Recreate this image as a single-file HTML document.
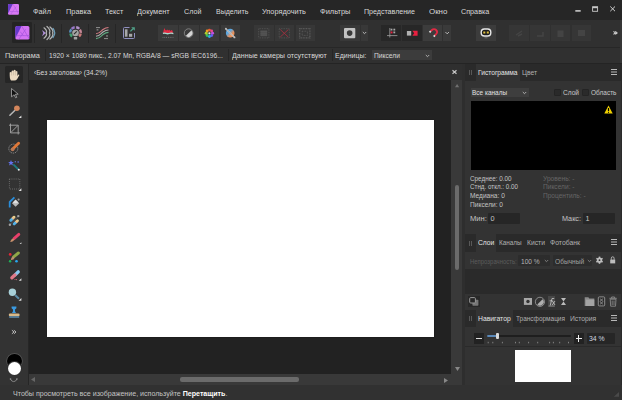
<!DOCTYPE html>
<html><head><meta charset="utf-8">
<style>
*{margin:0;padding:0;box-sizing:border-box}
html,body{width:622px;height:400px;overflow:hidden;background:#262626;font-family:"Liberation Sans",sans-serif;}
.a{position:absolute}
.t{position:absolute;white-space:nowrap;font-size:8px;letter-spacing:-0.5px;color:#d8d8d8;line-height:10px}
svg{position:absolute;overflow:visible}
.p{font-size:7.3px;color:#c4c4c4}
.ham{width:6.3px;height:1.2px;background:#b8b8b8;box-shadow:0 2.5px 0 #b8b8b8,0 5px 0 #b8b8b8}
</style></head><body>
<!-- menu bar -->
<div class="a" style="left:0;top:0;width:622px;height:20px;background:#262626"></div>
<div class="t" style="left:33.3px;top:6.6px;letter-spacing:0;transform:scaleX(0.9099);transform-origin:0 0">Файл</div>
<div class="t" style="left:65.5px;top:6.6px;letter-spacing:0;transform:scaleX(0.9249);transform-origin:0 0">Правка</div>
<div class="t" style="left:104.5px;top:6.6px;letter-spacing:0;transform:scaleX(0.9086);transform-origin:0 0">Текст</div>
<div class="t" style="left:137.0px;top:6.6px;letter-spacing:0;transform:scaleX(0.9211);transform-origin:0 0">Документ</div>
<div class="t" style="left:184.0px;top:6.6px;letter-spacing:0;transform:scaleX(0.8945);transform-origin:0 0">Слой</div>
<div class="t" style="left:215.9px;top:6.6px;letter-spacing:0;transform:scaleX(0.8779);transform-origin:0 0">Выделить</div>
<div class="t" style="left:261.8px;top:6.6px;letter-spacing:0;transform:scaleX(0.9221);transform-origin:0 0">Упорядочить</div>
<div class="t" style="left:319.5px;top:6.6px;letter-spacing:0;transform:scaleX(0.9318);transform-origin:0 0">Фильтры</div>
<div class="t" style="left:364.0px;top:6.6px;letter-spacing:0;transform:scaleX(0.8841);transform-origin:0 0">Представление</div>
<div class="t" style="left:428.8px;top:6.6px;letter-spacing:0;transform:scaleX(0.9896);transform-origin:0 0">Окно</div>
<div class="t" style="left:461.4px;top:6.6px;letter-spacing:0;transform:scaleX(0.9015);transform-origin:0 0">Справка</div>
<!-- window controls -->
<svg style="left:0;top:0" width="622" height="20" viewBox="0 0 622 20">
 <path d="M575.3 10.9 H580.7" stroke="#d4d4d4" stroke-width="1.5"/>
 <rect x="592.6" y="6.7" width="5" height="4.6" fill="none" stroke="#c8c8c8" stroke-width="0.9"/>
 <path d="M592.6 7.5 H597.6" stroke="#c8c8c8" stroke-width="1.4"/>
 <path d="M610.3 6.5 L615 11.2 M615 6.5 L610.3 11.2" stroke="#d0d0d0" stroke-width="1"/>
</svg>
<!-- toolbar -->
<div class="a" style="left:0;top:20px;width:622px;height:27px;background:#303030"></div>
<div class="a" style="left:12px;top:22px;width:20px;height:21px;background:#242424;border-radius:1px"></div>
<svg style="left:0;top:0" width="622" height="48" viewBox="0 0 622 48">
 <defs>
  <linearGradient id="lg2" x1="0" y1="0" x2="1" y2="1"><stop offset="0" stop-color="#6236c8"/><stop offset="0.45" stop-color="#b45ce8"/><stop offset="1" stop-color="#e47af6"/></linearGradient>
 </defs>
 <!-- menu logo -->
 <rect x="8" y="4" width="11" height="10.8" rx="1.2" fill="#d878f4"/>
 <path d="M9.2 4 H12.9 L8 13.6 V5.2 Q8 4 9.2 4Z" fill="#6a3cc8"/>
 <path d="M12.9 4 L18.8 14 M10.5 14.6 L16.2 6.5 M9.5 11.5 H19" stroke="#b05ae0" stroke-width="0.6" fill="none"/>
 <!-- persona logo -->
 <rect x="15.4" y="25.9" width="14" height="13.7" rx="1.6" fill="#d474f4"/>
 <path d="M17 25.9 H21.6 L15.4 38.2 V27.5 Q15.4 25.9 17 25.9Z" fill="#6638cc"/>
 <path d="M21.6 25.9 L29.2 38.8 M18.6 39.6 L25.8 29.2 M16.2 35.6 H29.4 M20 31.5 L23.5 35.6" stroke="#a454dc" stroke-width="0.7" fill="none"/>
 <!-- separators -->
 <path d="M34.5 24 V43 M61.5 24 V43 M88.5 24 V43 M115.5 24 V43" stroke="#262626" stroke-width="1"/>
 <!-- liquify -->
 <path d="M42 30 L46 33 L42 36.2 L43.3 33Z" fill="#b090d8"/>
 <path d="M44 27.8 Q47.5 30.5 46.2 33 Q47.5 35.5 44 38.2 M47 26.5 Q51 30 49.5 33 Q51 36 47 39.5 M50 27 Q54 30.5 52.6 33 Q54 35.5 50 39" stroke="#b4b4b4" stroke-width="1.25" fill="none" stroke-linecap="round"/>
 <path d="M53 28.5 Q56.5 33 53 37.6" stroke="#6a9cb8" stroke-width="1.25" fill="none" stroke-linecap="round"/>
 <!-- develop -->
 <g fill="none" stroke-width="2.4">
  <path d="M70.20 32.56 A5.3 5.3 0 0 1 71.29 29.28" stroke="#5a90c0"/>
  <path d="M71.64 28.87 A5.3 5.3 0 0 1 74.69 27.26" stroke="#9878c8"/>
  <path d="M76.17 27.24 A5.3 5.3 0 0 1 79.27 28.77" stroke="#b090c8"/>
  <path d="M79.95 29.62 A5.3 5.3 0 0 1 80.78 32.97" stroke="#c88898"/>
  <path d="M80.72 33.42 A5.3 5.3 0 0 1 79.05 36.44" stroke="#c87878"/>
  <path d="M72.06 36.53 A5.3 5.3 0 0 1 70.31 33.56" stroke="#40a070"/>
 </g>
 <circle cx="75.5" cy="33" r="3.3" fill="#a4a4a4"/>
 <path d="M74 34.2 L76.8 31.4" stroke="#2a2a2a" stroke-width="1.1"/>
 <rect x="73.8" y="36.9" width="3.4" height="2.6" rx="0.4" fill="#a4a4a4"/>
 <!-- tone map -->
 <path d="M96 27.6 H100" stroke="#9a9a9a" stroke-width="0.9"/>
 <rect x="96.6" y="29.2" width="1.8" height="1.3" fill="#8a8a8a"/>
 <path d="M104 38.6 H108" stroke="#9a9a9a" stroke-width="0.9"/>
 <rect x="106.1" y="35.3" width="1.8" height="1.3" fill="#8a8a8a"/>
 <path d="M96 33.8 C100 33.8 101 31 103 29.5 S106.5 27.5 108.5 27.5" stroke="#d07a80" stroke-width="1.1" fill="none"/>
 <path d="M96 36.2 C100 36.2 101 33.5 103 32 S106.5 30 108.5 30" stroke="#b0b0b0" stroke-width="1.1" fill="none"/>
 <path d="M96 38.6 C100 38.6 101 36 103 34.5 S106.5 32.4 108.5 32.4" stroke="#60a880" stroke-width="1.1" fill="none"/>
 <!-- export -->
 <path d="M129.5 27.5 H124.5 Q123.5 27.5 123.5 28.5 V37.5 Q123.5 38.5 124.5 38.5 H133.5 Q134.5 38.5 134.5 37.5 V33" stroke="#9090c0" stroke-width="1" fill="none"/>
 <rect x="124.9" y="29.3" width="2.6" height="7.4" fill="#a8a8a8"/>
 <rect x="129" y="33.8" width="3.2" height="3" fill="#a8a8a8"/>
 <path d="M130.4 31.4 L133 28.8" stroke="#50a088" stroke-width="1.3"/>
 <path d="M131.2 27.2 H134.8 V30.8Z" fill="#50a088"/>
</svg>
<!-- adjustment group -->
<div class="a" style="left:158px;top:25px;width:20px;height:16px;background:#3a3a3a"></div>
<div class="a" style="left:179px;top:25px;width:20px;height:16px;background:#3a3a3a"></div>
<div class="a" style="left:200px;top:25px;width:19px;height:16px;background:#3a3a3a"></div>
<div class="a" style="left:220.5px;top:25px;width:19.5px;height:16px;background:#3a3a3a"></div>
<div class="a" style="left:254px;top:25px;width:20px;height:16px;background:#373737"></div>
<div class="a" style="left:275px;top:25px;width:19px;height:16px;background:#373737"></div>
<div class="a" style="left:295.5px;top:25px;width:19.5px;height:16px;background:#373737"></div>
<div class="a" style="left:340px;top:25px;width:20px;height:15.5px;background:#383838"></div>
<div class="a" style="left:361px;top:25px;width:7px;height:15.5px;background:#383838"></div>
<div class="a" style="left:381.4px;top:25px;width:19.5px;height:15.5px;background:#272727"></div>
<div class="a" style="left:402px;top:25px;width:19.6px;height:15.5px;background:#272727"></div>
<div class="a" style="left:422.6px;top:25px;width:19.5px;height:15.5px;background:#3c3c3c"></div>
<div class="a" style="left:443.2px;top:25px;width:7.7px;height:15.5px;background:#3a3a3a"></div>
<div class="a" style="left:476px;top:25px;width:20px;height:15.5px;background:#3c3c3c"></div>
<div class="a" style="left:509.4px;top:25px;width:19.6px;height:15.5px;background:#363636"></div>
<div class="a" style="left:530px;top:25px;width:20px;height:15.5px;background:#363636"></div>
<div class="a" style="left:551px;top:25px;width:19.3px;height:15.5px;background:#363636"></div>
<div class="a" style="left:571.6px;top:25px;width:19.5px;height:15.5px;background:#363636"></div>
<svg style="left:0;top:0" width="622" height="48" viewBox="0 0 622 48">
 <!-- levels -->
 <path d="M163 33.6 L163.5 31 L164.3 28.1 L165.3 30 L166.2 30.4 L167.2 29.6 L168.2 30.6 L169.3 29.8 L170.4 31 L171.5 29.9 L172.4 30.5 L173.1 33.6Z" fill="#e02a42"/>
 <path d="M162.9 33.4 Q164.5 32.8 166 33.4 T169 33.5 T171.5 33.2 T173.4 33.6" stroke="#a8dcd0" stroke-width="1.3" fill="none"/>
 <path d="M162.6 37.4 H173.8" stroke="#8a8a8a" stroke-width="0.8" stroke-dasharray="0.8 1"/>
 <!-- brightness -->
 <circle cx="188.6" cy="33.1" r="4.3" fill="none" stroke="#8a8a8a" stroke-width="0.85"/>
 <path d="M191.3 30.4 A3.8 3.8 0 0 1 185.9 35.8Z" fill="#d4d4d4"/>
 <!-- color wheel -->
 <g transform="translate(209.4 33.3)">
  <circle cx="0" cy="-3.2" r="1.45" fill="#f05a30"/>
  <circle cx="2.26" cy="-2.26" r="1.45" fill="#e84890"/>
  <circle cx="3.2" cy="0" r="1.45" fill="#c050e0"/>
  <circle cx="2.26" cy="2.26" r="1.45" fill="#6a5af0"/>
  <circle cx="0" cy="3.2" r="1.45" fill="#30a8f0"/>
  <circle cx="-2.26" cy="2.26" r="1.45" fill="#30c060"/>
  <circle cx="-3.2" cy="0" r="1.45" fill="#a8d030"/>
  <circle cx="-2.26" cy="-2.26" r="1.45" fill="#f0a020"/>
  <circle cx="0" cy="0" r="1.1" fill="#f0f0f0"/>
 </g>
 <!-- white balance -->
 <defs><linearGradient id="wb" x1="0" y1="0" x2="1" y2="1"><stop offset="0.35" stop-color="#58a8e4"/><stop offset="0.65" stop-color="#e8905a"/></linearGradient></defs>
 <circle cx="230.2" cy="33.1" r="4.3" fill="url(#wb)"/>
 <path d="M226 28.9 L234.4 37.3" stroke="#d0d0d0" stroke-width="1.4"/>
 <path d="M226 28.9 L234.4 37.3" stroke="#6a6a6a" stroke-width="0.6" stroke-dasharray="0.8 0.8"/>
 <circle cx="225.9" cy="28.8" r="0.95" fill="#bdbdbd"/><circle cx="234.5" cy="37.4" r="0.95" fill="#bdbdbd"/>
 <!-- select all -->
 <rect x="258.7" y="28.7" width="10.2" height="9.2" fill="none" stroke="#5e5e5e" stroke-width="0.8" stroke-dasharray="0.8 0.9"/>
 <rect x="260.4" y="30.4" width="6.8" height="5.8" fill="#4e4e4e"/>
 <path d="M260.4 31.5 H267.2 M260.4 33.3 H267.2 M260.4 35.1 H267.2" stroke="#585858" stroke-width="0.6"/>
 <!-- deselect -->
 <rect x="279.2" y="28.7" width="10.2" height="9.2" fill="none" stroke="#5e5e5e" stroke-width="0.8" stroke-dasharray="0.8 0.9"/>
 <path d="M280.2 29.5 L288.4 37.1 M288.4 29.5 L280.2 37.1" stroke="#a03040" stroke-width="0.9"/>
 <!-- invert -->
 <rect x="299.7" y="28.7" width="10.2" height="9.2" fill="none" stroke="#5e5e5e" stroke-width="1.2" stroke-dasharray="0.9 0.7"/>
 <rect x="302.2" y="31.2" width="5.2" height="4.2" fill="none" stroke="#5e5e5e" stroke-width="0.8" stroke-dasharray="0.8 0.7"/>
 <!-- quick mask -->
 <rect x="344" y="27.9" width="11.3" height="10.4" rx="1" fill="#c2c2c2"/>
 <circle cx="349.65" cy="33.1" r="2.8" fill="#3a3a3a"/>
 <path d="M362.8 32 L364.5 33.7 L366.2 32" stroke="#b8b8b8" stroke-width="1" fill="none"/>
 <!-- snap grid -->
 <path d="M389.8 28 V37.5 M387 35.6 H397.4" stroke="#a0a0a0" stroke-width="0.8"/>
 <rect x="390.6" y="28.7" width="1.8" height="1.8" fill="#a8a8a8"/>
 <rect x="393.4" y="28.7" width="1.8" height="1.8" fill="#a8a8a8"/>
 <rect x="390.6" y="31.5" width="1.9" height="1.9" fill="#e82040"/>
 <rect x="393.4" y="31.5" width="1.8" height="1.8" fill="#a8a8a8"/>
 <!-- snap to -->
 <rect x="406.9" y="31" width="4.3" height="4.6" fill="#b0b0b0"/>
 <path d="M412.4 30.7 H417.6 V35.8 H412.4 L414.2 33.3Z" fill="#e82040"/>
 <!-- magnet -->
 <path d="M430.6 31.3 L431.9 30 A2.95 2.95 0 0 1 436.1 34.2 L434.8 35.5" stroke="#e02a44" stroke-width="1.8" fill="none"/>
 <path d="M430.7 31.2 L429.5 32.4 M434.9 35.4 L433.7 36.6" stroke="#e0e0e0" stroke-width="1.8"/>
 <path d="M445.5 32.1 L447.2 33.8 L448.9 32.1" stroke="#c0c0c0" stroke-width="1" fill="none"/>
 <!-- assistant -->
 <rect x="481.2" y="29" width="9.6" height="7" rx="3.2" fill="#1e1e1e" stroke="#e8e8e8" stroke-width="1.4"/>
 <rect x="483.3" y="31.5" width="2" height="2" fill="#e0c040"/>
 <rect x="486.8" y="31.5" width="2" height="2" fill="#e0c040"/>
 <path d="M484.5 37.8 H487.5" stroke="#888" stroke-width="0.7"/>
 <!-- disabled icons -->
 <path d="M516 35 L522 31 M518 36 L522 34" stroke="#444" stroke-width="1.5"/>
 <path d="M537 36 H543 V32" stroke="#444" stroke-width="1.5" fill="none"/>
 <rect x="557.5" y="30.5" width="6" height="6.5" fill="#444"/>
 <rect x="578" y="30" width="7" height="6" fill="#444"/>
 <!-- >> -->
 <path d="M613.5 31.4 L615.3 32.9 L613.5 34.4 M615.3 31.4 L617.1 32.9 L615.3 34.4" stroke="#d0d0d0" stroke-width="1.1" fill="none"/>
</svg>
<!-- context bar -->
<div class="a" style="left:0;top:47px;width:622px;height:15.5px;background:#303030"></div>
<div class="a" style="left:0;top:46.5px;width:622px;height:1px;background:#272727"></div>
<div class="a" style="left:620.3px;top:20px;width:1.7px;height:42.5px;background:#363636"></div>
<div class="t" style="left:5.3px;top:51px;letter-spacing:0;transform:scaleX(0.9177);transform-origin:0 0">Панорама</div>
<div class="a" style="left:44.5px;top:49px;width:1px;height:12px;background:#262626"></div>
<div class="t" style="left:48.7px;top:51px;letter-spacing:0;transform:scaleX(0.8422);transform-origin:0 0">1920 × 1080 пикс., 2.07 Мп, RGBA/8 — sRGB IEC6196...</div>
<div class="a" style="left:227.5px;top:49px;width:1px;height:12px;background:#262626"></div>
<div class="t" style="left:231.5px;top:51px;letter-spacing:0;transform:scaleX(0.8920);transform-origin:0 0">Данные камеры отсутствуют</div>
<div class="a" style="left:332px;top:49px;width:1px;height:12px;background:#262626"></div>
<div class="t" style="left:335.3px;top:51px;letter-spacing:0;transform:scaleX(0.8769);transform-origin:0 0">Единицы:</div>
<div class="a" style="left:371.5px;top:50px;width:60.5px;height:10px;background:#3c3c3c"></div>
<div class="t" style="left:373.5px;top:51px;letter-spacing:0;transform:scaleX(0.8349);transform-origin:0 0">Пиксели</div>
<svg style="left:425px;top:53.5px" width="5" height="4"><path d="M0.8 1 L2.5 2.7 L4.2 1" stroke="#bbb" stroke-width="0.9" fill="none"/></svg>

<!-- main dark background -->
<div class="a" style="left:0;top:62.5px;width:622px;height:322px;background:#2e2e2e"></div>
<div class="a" style="left:0;top:62.5px;width:622px;height:1.5px;background:#242424"></div>
<div class="a" style="left:27.5px;top:64px;width:1px;height:320.5px;background:#262626"></div>
<div class="a" style="left:461.2px;top:64px;width:1px;height:320.5px;background:#282828"></div>
<div class="a" style="left:619.5px;top:64px;width:2.5px;height:320.5px;background:#2a2a2a"></div>
<div class="a" style="left:28.5px;top:80px;width:422.3px;height:293.5px;background:#222222"></div>
<!-- left tools -->
<div class="a" style="left:0;top:64px;width:27.5px;height:320.5px;background:#333333"></div>
<div class="a" style="left:5.2px;top:65.8px;width:17.5px;height:17.1px;background:#262626;border-radius:1.5px"></div>

<!-- hand -->
<svg style="left:0;top:60px" width="28" height="30" viewBox="0 60 28 30">
 <path d="M10.6 80 Q9.6 77.5 9.7 75.5 V72.6 Q10.7 71.6 11.6 72.6 V71 Q12.6 69.8 13.6 71 V70.4 Q14.6 69.2 15.6 70.4 V71.6 Q16.5 70.6 17.4 71.6 V76 L18.4 74.6 Q19.4 74.4 19.3 75.3 L17.2 79 Q16.2 80.6 14.2 80.6 H12.2 Q11 80.6 10.6 80Z" fill="#eedcc2"/>
 <path d="M11.6 72.6 V75.5 M13.6 71 V75.3 M15.6 70.4 V75.5" stroke="#b8a894" stroke-width="0.45"/>
</svg>
<!-- move -->
<svg style="left:11px;top:88px" width="8" height="10" viewBox="0 0 8 10"><path d="M0.5 0.5 L7.2 6.2 L4.3 6.3 L5.8 9.3 L4.6 9.8 L3.1 6.8 L0.5 8.8Z" fill="#111" stroke="#bbb" stroke-width="0.7"/></svg>
<svg style="left:0;top:0" width="28" height="400" viewBox="0 0 28 400">
 <!-- color picker -->
 <path d="M9.9 115.2 L15 110.3" stroke="#b8b8b8" stroke-width="1.5" stroke-linecap="round"/>
 <circle cx="16.9" cy="108.2" r="2.8" fill="#d4865c"/>
 <path d="M18.6 118 H21.4 V115.4Z" fill="#e0e0e0"/>
 <!-- crop -->
 <path d="M10.5 123.6 V132.9 H19.8 M9 125.2 H18.2 V134.5 M10.8 132.6 L17.9 125.5" stroke="#a0a0a0" stroke-width="0.95" fill="none"/>
 <!-- selection brush -->
 <circle cx="13.3" cy="148.6" r="4.5" fill="none" stroke="#b0b0b0" stroke-width="0.75" stroke-dasharray="1.1 0.9"/>
 <path d="M13.2 148.5 L18.6 143.2" stroke="#e07838" stroke-width="2.9" stroke-linecap="round"/>
 <circle cx="12.6" cy="149.3" r="1.9" fill="#b87a58"/>
 <!-- magic wand -->
 <path d="M13.3 164.3 L18.5 169.5" stroke="#1e7a80" stroke-width="1.8"/>
 <circle cx="18.8" cy="169.8" r="1" fill="#e8e8e8"/>
 <path d="M11 159.9 L11.8 161.9 L13.9 162 L12.3 163.3 L12.9 165.4 L11 164.2 L9.1 165.4 L9.7 163.3 L8.1 162 L10.2 161.9Z" fill="#6474f0"/>
 <path d="M14.7 161.8 H16 M17.4 162 H19" stroke="#6474f0" stroke-width="1"/>
 <!-- marquee -->
 <rect x="9.4" y="179" width="10.4" height="10" fill="none" stroke="#8a8a8a" stroke-width="0.7" stroke-dasharray="0.9 1.2"/>
 <path d="M18.6 191 H21.4 V188.2Z" fill="#e0e0e0"/>
 <!-- flood fill -->
 <path d="M9.7 207.6 V202 L14.4 197.4" stroke="#2a8cd8" stroke-width="1.8" fill="none" stroke-linejoin="round"/>
 <path d="M15.6 199.6 L19.2 203.2 L15.6 206.8 L12 203.2Z" fill="#b8b8b8"/>
 <path d="M12.8 202.6 L15.6 199.8 L18.4 202.6 Q15.6 204 12.8 202.6Z" fill="#e0e0e0"/>
 <circle cx="18.6" cy="199.6" r="1.1" fill="#9a9a9a"/>
 <!-- healing -->
 <defs><linearGradient id="pill" x1="0" y1="0" x2="1" y2="0"><stop offset="0" stop-color="#48a8e0"/><stop offset="0.48" stop-color="#60b8e8"/><stop offset="0.52" stop-color="#e8b888"/><stop offset="1" stop-color="#e8d890"/></linearGradient></defs>
 <path d="M10 224.6 L18.3 216.2" stroke="#8a8a8a" stroke-width="0.8" stroke-dasharray="0.9 0.6"/>
 <circle cx="9.9" cy="224.7" r="1.2" fill="#a0a0a0"/><circle cx="18.3" cy="216.1" r="1.2" fill="#a0a0a0"/>
 <g transform="rotate(-45 12.4 218.8)"><rect x="8.7" y="217.4" width="7.4" height="2.8" rx="1.3" fill="url(#pill)"/></g>
 <g transform="rotate(-45 15.8 222.4)"><rect x="12.1" y="221" width="7.4" height="2.8" rx="1.3" fill="url(#pill)"/></g>
 <!-- brush -->
 <path d="M14 238.6 L18.8 234.4" stroke="#e8406a" stroke-width="2.9" stroke-linecap="round"/>
 <path d="M10.2 242 Q10.6 239 13 238.4 L14.3 239.6 Q13.6 242 10.2 242Z" fill="#c8906c"/>
 <path d="M19.6 244 H21.4 V242.2Z" fill="#d8d8d8"/>
 <!-- mixer brush -->
 <path d="M13.6 256.8 L18.4 253" stroke="#90a848" stroke-width="2.9" stroke-linecap="round"/>
 <path d="M10.8 260 Q11 257.2 13 256.6 L14.5 258 Q14 260.2 10.8 260Z" fill="#c09070"/>
 <circle cx="10.2" cy="254.4" r="1.4" fill="#e02838"/>
 <circle cx="10.1" cy="261.2" r="1.2" fill="#20b058"/>
 <circle cx="16.5" cy="261.2" r="1.3" fill="#28a8f0"/>
 <!-- eraser -->
 <path d="M15.4 274.6 L18.2 271.9" stroke="#88c8f0" stroke-width="3.4" stroke-linecap="round"/>
 <path d="M11.9 277.8 L14.9 275" stroke="#e07888" stroke-width="3.4" stroke-linecap="round"/>
 <circle cx="15" cy="279.5" r="0.6" fill="#d06070"/><circle cx="16.5" cy="279.6" r="0.6" fill="#d06070"/>
 <path d="M18.8 280.8 H21.4 V278.2Z" fill="#e0e0e0"/>
 <!-- zoom -->
 <path d="M15.3 295.2 L19 298.8" stroke="#5a8ca8" stroke-width="2"/>
 <circle cx="12.4" cy="292.2" r="3.7" fill="#a8d0d8"/>
 <path d="M18.6 300.8 H21.4 V298.1Z" fill="#e0e0e0"/>
 <!-- stamp -->
 <path d="M11.6 306.6 H16.4 V308.2 L15 309.6 V311.2 L16 313 H12 L13 311.2 V309.6 L11.6 308.2Z" fill="#3a9ae0"/>
 <rect x="8.8" y="313.6" width="10.8" height="2.6" rx="1.2" fill="#d8b888"/>
 <rect x="9.2" y="316.2" width="10" height="1.6" fill="#5a88a8"/>
 <!-- >> -->
 <path d="M11.9 330.2 L14 332 L11.9 333.8 M13.9 330.2 L16 332 L13.9 333.8" stroke="#c8c8c8" stroke-width="0.9" fill="none"/>
</svg>
<!-- colors -->
<div class="a" style="left:7px;top:354px;width:14.5px;height:14px;border-radius:50%;background:#000;box-shadow:0 0 0 0.7px #5a5a5a"></div>
<div class="a" style="left:7.6px;top:361.6px;width:13.4px;height:13.4px;border-radius:50%;background:#fff;box-shadow:0 0 0 1px #333"></div>
<svg style="left:0;top:370px" width="28" height="20" viewBox="0 370 28 20"><path d="M10.6 379.2 Q11.5 381.6 13.7 381.6 Q15.9 381.6 16.8 379.2" stroke="#8a8a8a" stroke-width="0.9" fill="none"/><circle cx="10.5" cy="379" r="0.8" fill="#9a9a9a"/><circle cx="16.9" cy="379" r="0.8" fill="#9a9a9a"/></svg>


<!-- document tab bar -->
<div class="a" style="left:28.5px;top:64px;width:433.2px;height:16px;background:#2f2f2f"></div>
<div class="t" style="left:34.3px;top:67.5px;letter-spacing:0;transform:scaleX(0.8346);transform-origin:0 0">‹Без заголовка› (34.2%)</div>
<svg style="left:452px;top:70.2px" width="5" height="4" viewBox="0 0 4.6 3.8"><path d="M0.4 0.3L4.2 3.5M4.2 0.3L0.4 3.5" stroke="#c8c8c8" stroke-width="1.1"/></svg>
<!-- canvas -->
<div class="a" style="left:47px;top:119.6px;width:387.4px;height:217.7px;background:#ffffff;box-shadow:0 0 1.5px 0.5px rgba(0,0,0,0.45)"></div>
<!-- v scrollbar -->
<div class="a" style="left:450.8px;top:80px;width:11px;height:293.5px;background:#393939"></div>
<div class="a" style="left:455px;top:185px;width:4px;height:84.5px;background:#6b6b6b;border-radius:2px"></div>
<svg style="left:455px;top:83.8px" width="4.2" height="3.3"><path d="M2.1 0 L4.2 3.3 H0Z" fill="#707070"/></svg>
<svg style="left:454.5px;top:367px" width="5" height="4"><path d="M0 0 H5 L2.5 4Z" fill="#888"/></svg>
<!-- h scrollbar -->
<div class="a" style="left:28.5px;top:373.5px;width:433px;height:11.1px;background:#393939"></div>
<div class="a" style="left:180px;top:377px;width:119px;height:4.5px;background:#6b6b6b;border-radius:2px"></div>
<svg style="left:31px;top:376.5px" width="4" height="5"><path d="M4 0 V5 L0 2.5Z" fill="#666"/></svg>
<svg style="left:444px;top:377.5px" width="4" height="5"><path d="M0 0 V5 L4 2.5Z" fill="#888"/></svg>

<!-- status bar -->
<div class="a" style="left:0;top:384.6px;width:622px;height:15.4px;background:#313131"></div>
<div class="t" style="left:13.0px;top:388.5px;color:#c4c4c4;letter-spacing:0;transform:scaleX(0.8845);transform-origin:0 0">Чтобы просмотреть все изображение, используйте <b style="color:#fff">Перетащить</b>.</div>


<!-- right panel -->
<div class="a" style="left:465px;top:64px;width:155.5px;height:320.5px;background:#333333"></div>
<!-- histogram header -->
<div class="a" style="left:465px;top:64px;width:155.5px;height:16.5px;background:#2a2a2a"></div>
<div class="a" style="left:475.8px;top:64px;width:44.2px;height:16.5px;background:#333333"></div>
<div class="a" style="left:469px;top:70.0px;width:0.8px;height:5px;background:#585858"></div>
<div class="a" style="left:471.3px;top:70.0px;width:0.8px;height:5px;background:#585858"></div>
<div class="t p" style="left:478.0px;top:67.9px;color:#e4e4e4;font-size:8px;letter-spacing:0;transform:scaleX(0.8291);transform-origin:0 0">Гистограмма</div>
<div class="t p" style="left:522.2px;top:67.9px;color:#b0b0b0;font-size:8px;letter-spacing:0;transform:scaleX(0.8418);transform-origin:0 0">Цвет</div>
<div class="a ham" style="left:610.7px;top:69.3px"></div>
<!-- histogram content -->
<div class="a" style="left:471px;top:87.5px;width:57.5px;height:9.5px;background:#3e3e3e"></div>
<div class="t p" style="left:472.4px;top:88.2px;color:#e0e0e0;letter-spacing:0;transform:scaleX(0.8862);transform-origin:0 0">Все каналы</div>
<svg style="left:522px;top:91px" width="5" height="4"><path d="M0.8 1 L2.5 2.7 L4.2 1" stroke="#bbb" stroke-width="0.9" fill="none"/></svg>
<div class="a" style="left:554px;top:88.8px;width:6.7px;height:7px;background:#2a2a2a;border:0.6px solid #242424;border-radius:1px"></div>
<div class="t p" style="left:563.0px;top:88.2px;color:#c8c8c8;letter-spacing:0;transform:scaleX(0.9014);transform-origin:0 0">Слой</div>
<div class="a" style="left:582.2px;top:88.8px;width:6.7px;height:7px;background:#2a2a2a;border:0.6px solid #242424;border-radius:1px"></div>
<div class="t p" style="left:591.2px;top:88.2px;color:#c8c8c8;letter-spacing:0;transform:scaleX(0.8903);transform-origin:0 0">Область</div>
<div class="a" style="left:471px;top:100.8px;width:144.8px;height:69px;background:#000"></div>
<svg style="left:604px;top:104.5px" width="9" height="9" viewBox="0 0 9 9"><path d="M4.5 0.5 L8.7 8.5 H0.3Z" fill="#f0d000"/><path d="M4.5 3 V6" stroke="#000" stroke-width="1.2"/><rect x="4" y="6.8" width="1" height="1" fill="#000"/></svg>
<div class="t p" style="left:469.7px;top:173.7px;letter-spacing:0;transform:scaleX(0.8666);transform-origin:0 0">Среднее: 0.00</div>
<div class="t p" style="left:469.7px;top:182.4px;letter-spacing:0;transform:scaleX(0.8569);transform-origin:0 0">Стнд. откл.: 0.00</div>
<div class="t p" style="left:469.7px;top:191.1px;letter-spacing:0;transform:scaleX(0.9002);transform-origin:0 0">Медиана: 0</div>
<div class="t p" style="left:469.7px;top:199.8px;letter-spacing:0;transform:scaleX(0.9037);transform-origin:0 0">Пиксели: 0</div>
<div class="t p" style="left:543.2px;top:173.7px;color:#666;letter-spacing:0;transform:scaleX(0.9106);transform-origin:0 0">Уровень: -</div>
<div class="t p" style="left:543.2px;top:182.4px;color:#666;letter-spacing:0;transform:scaleX(0.9028);transform-origin:0 0">Пиксели: -</div>
<div class="t p" style="left:543.2px;top:191.1px;color:#666;letter-spacing:0;transform:scaleX(0.8965);transform-origin:0 0">Процентиль: -</div>
<div class="t p" style="left:469.7px;top:213.7px;letter-spacing:0;transform:scaleX(1.0358);transform-origin:0 0">Мин:</div>
<div class="a" style="left:487.5px;top:212.5px;width:32px;height:11px;background:#262626;border-radius:1px"></div>
<div class="t p" style="left:490.5px;top:213.7px">0</div>
<div class="t p" style="left:562.3px;top:213.7px;letter-spacing:0;transform:scaleX(0.9910);transform-origin:0 0">Макс:</div>
<div class="a" style="left:582.5px;top:212.5px;width:32px;height:11px;background:#262626;border-radius:1px"></div>
<div class="t p" style="left:585.5px;top:213.7px">1</div>
<!-- layers header -->
<div class="a" style="left:465px;top:234px;width:155.5px;height:17.5px;background:#2a2a2a"></div>
<div class="a" style="left:475.8px;top:234px;width:20.4px;height:17.5px;background:#333333"></div>
<div class="a" style="left:469px;top:240.5px;width:0.8px;height:5px;background:#585858"></div>
<div class="a" style="left:471.3px;top:240.5px;width:0.8px;height:5px;background:#585858"></div>
<div class="t p" style="left:478.0px;top:238.4px;color:#e4e4e4;font-size:8px;letter-spacing:0;transform:scaleX(0.8379);transform-origin:0 0">Слои</div>
<div class="t p" style="left:498.9px;top:238.4px;color:#b0b0b0;font-size:8px;letter-spacing:0;transform:scaleX(0.7956);transform-origin:0 0">Каналы</div>
<div class="t p" style="left:527.0px;top:238.4px;color:#b0b0b0;font-size:8px;letter-spacing:0;transform:scaleX(0.8417);transform-origin:0 0">Кисти</div>
<div class="t p" style="left:550.0px;top:238.4px;color:#b0b0b0;font-size:8px;letter-spacing:0;transform:scaleX(0.8533);transform-origin:0 0">Фотобанк</div>
<div class="a ham" style="left:610.7px;top:239.1px"></div>
<!-- opacity row -->
<div class="t p" style="left:469.6px;top:256.7px;color:#5c5c5c;letter-spacing:0;transform:scaleX(0.8146);transform-origin:0 0">Непрозрачность:</div>
<div class="a" style="left:517.5px;top:255px;width:32.8px;height:11px;background:#2c2c2c;border-radius:1px"></div>
<div class="t p" style="left:521.1px;top:256.7px;color:#b4b4b4;letter-spacing:0;transform:scaleX(0.9032);transform-origin:0 0">100 %</div>
<svg style="left:544px;top:259px" width="5" height="4"><path d="M0.8 1 L2.5 2.7 L4.2 1" stroke="#888" stroke-width="0.9" fill="none"/></svg>
<div class="a" style="left:553.2px;top:255px;width:39px;height:11px;background:#2c2c2c;border-radius:1px"></div>
<div class="t p" style="left:555.3px;top:256.7px;color:#a0a0a0;letter-spacing:0;transform:scaleX(0.9050);transform-origin:0 0">Обычный</div>
<svg style="left:586.5px;top:259px" width="5" height="4"><path d="M0.8 1 L2.5 2.7 L4.2 1" stroke="#888" stroke-width="0.9" fill="none"/></svg>
<svg style="left:590px;top:250px" width="32" height="20" viewBox="590 250 32 20">
 <g transform="translate(599.5 260.2)" fill="#bdbdbd">
  <circle r="2.6"/>
  <rect x="-0.8" y="-3.6" width="1.6" height="7.2"/>
  <rect x="-0.8" y="-3.6" width="1.6" height="7.2" transform="rotate(60)"/>
  <rect x="-0.8" y="-3.6" width="1.6" height="7.2" transform="rotate(120)"/>
 </g>
 <circle cx="599.5" cy="260.2" r="0.9" fill="#333"/>
 <path d="M611.3 259.8 V258.2 A1.4 1.4 0 0 1 614.1 258.2 V259.8" stroke="#b8b8b8" stroke-width="0.9" fill="none"/>
 <rect x="610.2" y="259.6" width="5" height="3.8" fill="#bdbdbd"/>
</svg>
<!-- layers list -->
<div class="a" style="left:465px;top:268.5px;width:155.5px;height:25.5px;background:#2a2a2a"></div>
<!-- layers toolbar icons -->
<div class="a" style="left:468.1px;top:295.8px;width:11.8px;height:11px;background:#282828"></div>
<div class="a" style="left:548px;top:296.3px;width:7.2px;height:10.3px;background:#484848"></div>
<svg style="left:460px;top:290px" width="162" height="20" viewBox="460 290 162 20">
 <rect x="472.4" y="299.8" width="6" height="5.9" rx="0.8" fill="#777"/>
 <rect x="469.7" y="297.6" width="5.7" height="5.4" rx="1" fill="#282828" stroke="#999" stroke-width="1"/>
 <rect x="523.9" y="298" width="8.1" height="6.9" fill="#a8a8a8"/>
 <circle cx="527.95" cy="301.45" r="1.7" fill="#333"/>
 <circle cx="539.95" cy="301.85" r="4.6" fill="none" stroke="#999" stroke-width="0.85"/>
 <path d="M542.6 299.2 A3.7 3.7 0 0 1 537.3 304.5Z" fill="#b0b0b0"/>
 <path d="M550.2 305.5 L552 298.5 H554.2 M549.6 300.8 H552.6 M552.4 301 L555 305 M555 301 L552.2 305" stroke="#c8c8c8" stroke-width="0.8" fill="none"/>
 <path d="M548.6 306 H554.6" stroke="#aaa" stroke-width="0.6"/>
 <path d="M561 298 H566 L563.5 301.5 L566 305 H561 L563.5 301.5Z" fill="#bbb"/>
 <path d="M584.7 297.2 H588.4 L589.3 298.4 H594.3 V306 H584.7Z" fill="#8a8a8a"/>
 <rect x="585.8" y="299.6" width="8.5" height="6.4" fill="#a4a4a4"/>
 <rect x="598.3" y="296.9" width="6.4" height="9" rx="1" fill="#262626" stroke="#999" stroke-width="0.9"/>
 <path d="M599.8 298.5 L603.2 301.5 L599.8 304.5 M603.2 298.5 L599.8 301.5 L603.2 304.5" stroke="#aaa" stroke-width="0.7" fill="none"/>
 <path d="M609.4 298.3 H616.8 M611.6 298.3 V297 H614.6 V298.3" stroke="#8a8a8a" stroke-width="0.9" fill="none"/>
 <path d="M610.2 299.2 H616 L615.5 306.2 H610.7Z" fill="none" stroke="#8a8a8a" stroke-width="0.9"/>
 <path d="M612.2 300.6 V305 M614 300.6 V305" stroke="#8a8a8a" stroke-width="0.8"/>
</svg>
<!-- navigator header -->
<div class="a" style="left:465px;top:310px;width:155.5px;height:16.5px;background:#2a2a2a"></div>
<div class="a" style="left:475.8px;top:310px;width:37.2px;height:16.5px;background:#333333"></div>
<div class="a" style="left:469px;top:316.0px;width:0.8px;height:5px;background:#585858"></div>
<div class="a" style="left:471.3px;top:316.0px;width:0.8px;height:5px;background:#585858"></div>
<div class="t p" style="left:478.0px;top:313.9px;color:#e4e4e4;font-size:8px;letter-spacing:0;transform:scaleX(0.8507);transform-origin:0 0">Навигатор</div>
<div class="t p" style="left:515.5px;top:313.9px;color:#b0b0b0;font-size:8px;letter-spacing:0;transform:scaleX(0.8089);transform-origin:0 0">Трансформация</div>
<div class="t p" style="left:569.5px;top:313.9px;color:#b0b0b0;font-size:8px;letter-spacing:0;transform:scaleX(0.8443);transform-origin:0 0">История</div>
<div class="a ham" style="left:610.9px;top:315.1px"></div>
<!-- navigator controls -->
<div class="a" style="left:473.5px;top:333px;width:10px;height:10.5px;background:#222"></div>
<div class="a" style="left:475.5px;top:338px;width:6px;height:1px;background:#ddd"></div>
<div class="a" style="left:486.6px;top:334.5px;width:84px;height:2.2px;background:#1e1e1e;border-radius:1px"></div>
<div class="a" style="left:486.6px;top:334.5px;width:11px;height:2.2px;background:#5a88b8;border-radius:1px"></div>
<div class="a" style="left:496px;top:333px;width:3px;height:5.5px;background:#d8d8d8;border-radius:1px"></div>
<div class="a" style="left:573.8px;top:333px;width:10px;height:10.5px;background:#222"></div>
<div class="a" style="left:575.5px;top:338px;width:6.5px;height:1px;background:#eee"></div>
<div class="a" style="left:578.3px;top:335px;width:1px;height:6.5px;background:#eee"></div>
<div class="a" style="left:586.8px;top:332.5px;width:28.2px;height:11.5px;background:#262626;border-radius:1px"></div>
<div class="t p" style="left:589.1px;top:334.2px;color:#d0d8e0;letter-spacing:0;transform:scaleX(0.9375);transform-origin:0 0">34 %</div>
<svg style="left:480px;top:340px" width="100" height="5" viewBox="480 340 100 5"><path d="M488.2 341.8v1.5 M492.8 341.8v1.5 M502.4 341.8v1.5 M515.5 341.8v1.5 M519.3 341.8v1.5 M528.6 341.8v1.5 M537.7 341.8v1.5 M549.6 341.8v1.5 M553.4 341.8v1.5 M559.7 341.8v1.5 M568.5 341.8v1.5" stroke="#8a8a8a" stroke-width="0.9"/></svg>
<div class="a" style="left:465px;top:345.5px;width:155.5px;height:0.8px;background:#2a2a2a"></div>
<div class="a" style="left:515.3px;top:350.3px;width:55.7px;height:31.6px;background:#fff"></div>
<svg style="left:600px;top:380px" width="22" height="20" viewBox="600 380 22 20"><path d="M619 392 V396.8 H613.8Z" fill="#4a4a4a"/></svg>

</body></html>
